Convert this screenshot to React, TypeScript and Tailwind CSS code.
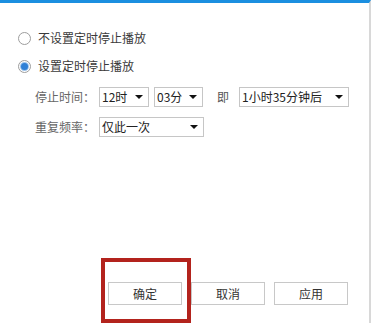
import React from "react";

const font = { fontFamily: '"Noto Sans CJK SC", "Noto Sans", sans-serif' };

function Radio({ checked, label }: { checked?: boolean; label: string }) {
  return (
    <label className="flex h-4 items-center gap-[7px] pl-[18px]">
      <span className="flex h-[13px] w-[13px] items-center justify-center rounded-full border border-[#9d9d9d] bg-white">
        {checked && <span className="h-[7px] w-[7px] rounded-full bg-[#2f80d6] ring-1 ring-[#9cc3ec]" />}
      </span>
      <span className="text-[12px] leading-none text-[#3a3a3a]">{label}</span>
    </label>
  );
}

function Select({ value, width }: { value: string; width: string }) {
  return (
    <div
      className={`flex h-5 items-center justify-between border border-[#c6c6c6] bg-white pl-[2px] pr-[5px] ${width}`}
    >
      <span className="text-[12px] leading-none text-[#222]">{value}</span>
      <span className="h-0 w-0 border-x-[4px] border-t-[4px] border-x-transparent border-t-[#111]" />
    </div>
  );
}

export default function App() {
  return (
    <div
      className="relative flex h-[323px] w-[371px] flex-col overflow-hidden border-t-[3px] border-r-2 border-t-[#1b8fe0] border-r-[#d8d8d8] bg-white"
      style={font}
    >
      <div className="flex flex-col pt-[27px]">
        <Radio label="不设置定时停止播放" />
        <div className="mt-3">
          <Radio checked label="设置定时停止播放" />
        </div>

        <div className="mt-[13px] flex items-center pl-[35px]">
          <span className="w-[64px] text-[12px] leading-none text-[#666]">停止时间：</span>
          <Select value="12时" width="w-[50px]" />
          <div className="ml-[5px]">
            <Select value="03分" width="w-[49px]" />
          </div>
          <span className="ml-[14px] text-[12px] leading-none text-[#555]">即</span>
          <div className="ml-[10px]">
            <Select value="1小时35分钟后" width="w-[110px]" />
          </div>
        </div>

        <div className="mt-[10px] flex items-center pl-[35px]">
          <span className="w-[64px] text-[12px] leading-none text-[#666]">重复频率：</span>
          <Select value="仅此一次" width="w-[105px]" />
        </div>
      </div>

      <div className="mt-auto flex gap-[9px] pb-[18px] pl-[108px]">
        {["确定", "取消", "应用"].map((t) => (
          <button
            key={t}
            className="flex h-[23px] w-[74px] items-center justify-center border border-[#c8c8c8] bg-white text-[12px] text-[#333]"
          >
            {t}
          </button>
        ))}
      </div>

      <div className="pointer-events-none absolute left-[101px] top-[255px] h-[65px] w-[90px] border-4 border-[#b3231d]" />
    </div>
  );
}
